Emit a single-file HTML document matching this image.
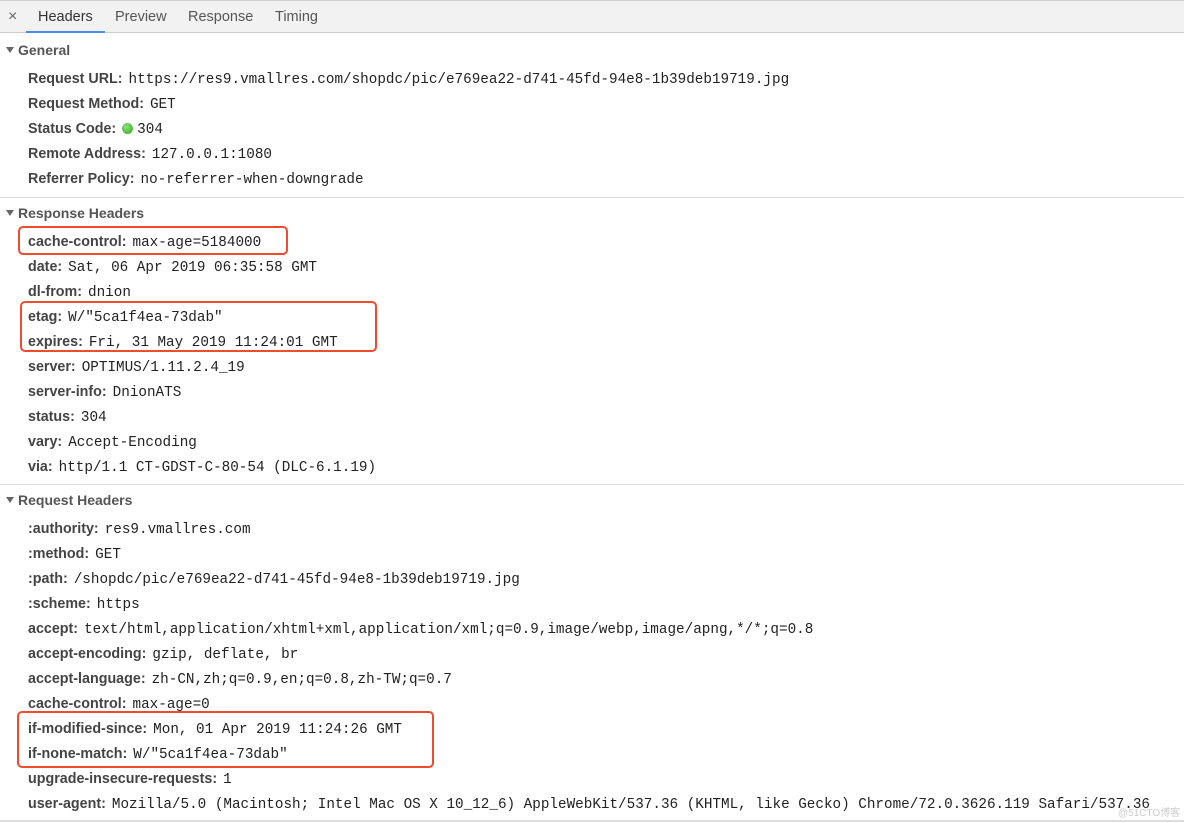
<!DOCTYPE html>
<html><head><meta charset="utf-8"><style>
*{margin:0;padding:0;box-sizing:border-box}
body{width:1184px;height:822px;background:#fff;position:relative;overflow:hidden;font-family:"Liberation Sans",Arial,sans-serif;color:#303942}
.tabs{position:absolute;left:0;top:0;width:1184px;height:33px;background:#f2f2f2;border-top:1px solid #cfcfcf;border-bottom:1px solid #cbcbcb}
.tab{position:absolute;top:0;height:32px;line-height:32px;font-size:14.5px;color:#555}
.sel{color:#333;border-bottom:2px solid #4a8ee6}
.sec{position:absolute;left:6px;font-size:14px;font-weight:bold;color:#555;height:20px;line-height:20px}
.sec:before{content:"";display:inline-block;border-left:4px solid transparent;border-right:4px solid transparent;border-top:6px solid #666;margin-right:4px;vertical-align:2px}
.rs{position:absolute;left:0;top:1px;width:1184px;height:822px}
.r{position:absolute;left:28px;height:22px;line-height:22px;white-space:nowrap;font-size:14.3px}
.r b{color:#444;font-weight:bold}
.r span{font-family:"Liberation Mono",monospace;font-size:14.3px;color:#222;margin-left:6px}
.hr{position:absolute;left:0;width:1184px;height:1px;background:#ddd}
.box{position:absolute;border:2.5px solid #f04a2f;border-radius:5px}
.wm{position:absolute;left:1118px;top:804px;font-size:10px;color:#ccc;white-space:nowrap;font-family:"Liberation Sans","Noto Sans CJK SC",sans-serif}
.dot{display:inline-block;width:11px;height:11px;border-radius:50%;background:radial-gradient(circle at 40% 35%,#8ee07a,#2fa51f);vertical-align:-1px;margin-left:6px}
</style></head><body>
<div class="tabs">
<div class="tab" style="left:8px;font-size:16px;color:#666">×</div>
<div class="tab sel" style="left:26px;padding:0 12px">Headers</div>
<div class="tab" style="left:115px">Preview</div>
<div class="tab" style="left:188px">Response</div>
<div class="tab" style="left:275px">Timing</div>
</div>
<div class="sec" style="top:40px">General</div>
<div class="sec" style="top:203px">Response Headers</div>
<div class="sec" style="top:490px">Request Headers</div>
<div class="rs">
<div class="r" style="top:67px"><b>Request URL:</b><span>https://res9.vmallres.com/shopdc/pic/e769ea22-d741-45fd-94e8-1b39deb19719.jpg</span></div>
<div class="r" style="top:92px"><b>Request Method:</b><span>GET</span></div>
<div class="r" style="top:117px"><b>Status Code:</b><i class="dot"></i><span style="margin-left:4px">304</span></div>
<div class="r" style="top:142px"><b>Remote Address:</b><span>127.0.0.1:1080</span></div>
<div class="r" style="top:167px"><b>Referrer Policy:</b><span>no-referrer-when-downgrade</span></div>
<div class="r" style="top:230px"><b>cache-control:</b><span>max-age=5184000</span></div>
<div class="r" style="top:255px"><b>date:</b><span>Sat, 06 Apr 2019 06:35:58 GMT</span></div>
<div class="r" style="top:280px"><b>dl-from:</b><span>dnion</span></div>
<div class="r" style="top:305px"><b>etag:</b><span>W/"5ca1f4ea-73dab"</span></div>
<div class="r" style="top:330px"><b>expires:</b><span>Fri, 31 May 2019 11:24:01 GMT</span></div>
<div class="r" style="top:355px"><b>server:</b><span>OPTIMUS/1.11.2.4_19</span></div>
<div class="r" style="top:380px"><b>server-info:</b><span>DnionATS</span></div>
<div class="r" style="top:405px"><b>status:</b><span>304</span></div>
<div class="r" style="top:430px"><b>vary:</b><span>Accept-Encoding</span></div>
<div class="r" style="top:455px"><b>via:</b><span>http/1.1 CT-GDST-C-80-54 (DLC-6.1.19)</span></div>
<div class="r" style="top:517px"><b>:authority:</b><span>res9.vmallres.com</span></div>
<div class="r" style="top:542px"><b>:method:</b><span>GET</span></div>
<div class="r" style="top:567px"><b>:path:</b><span>/shopdc/pic/e769ea22-d741-45fd-94e8-1b39deb19719.jpg</span></div>
<div class="r" style="top:592px"><b>:scheme:</b><span>https</span></div>
<div class="r" style="top:617px"><b>accept:</b><span>text/html,application/xhtml+xml,application/xml;q=0.9,image/webp,image/apng,*/*;q=0.8</span></div>
<div class="r" style="top:642px"><b>accept-encoding:</b><span>gzip, deflate, br</span></div>
<div class="r" style="top:667px"><b>accept-language:</b><span>zh-CN,zh;q=0.9,en;q=0.8,zh-TW;q=0.7</span></div>
<div class="r" style="top:692px"><b>cache-control:</b><span>max-age=0</span></div>
<div class="r" style="top:717px"><b>if-modified-since:</b><span>Mon, 01 Apr 2019 11:24:26 GMT</span></div>
<div class="r" style="top:742px"><b>if-none-match:</b><span>W/"5ca1f4ea-73dab"</span></div>
<div class="r" style="top:767px"><b>upgrade-insecure-requests:</b><span>1</span></div>
<div class="r" style="top:792px"><b>user-agent:</b><span>Mozilla/5.0 (Macintosh; Intel Mac OS X 10_12_6) AppleWebKit/537.36 (KHTML, like Gecko) Chrome/72.0.3626.119 Safari/537.36</span></div>
</div>
<div class="hr" style="top:197px"></div>
<div class="hr" style="top:484px"></div>
<div class="hr" style="top:820px;height:2px"></div>
<div class="box" style="left:18px;top:226px;width:270px;height:29px"></div>
<div class="box" style="left:20px;top:301px;width:357px;height:51px"></div>
<div class="box" style="left:17px;top:711px;width:417px;height:57px"></div>
<div class="wm">@51CTO博客</div>
</body></html>
